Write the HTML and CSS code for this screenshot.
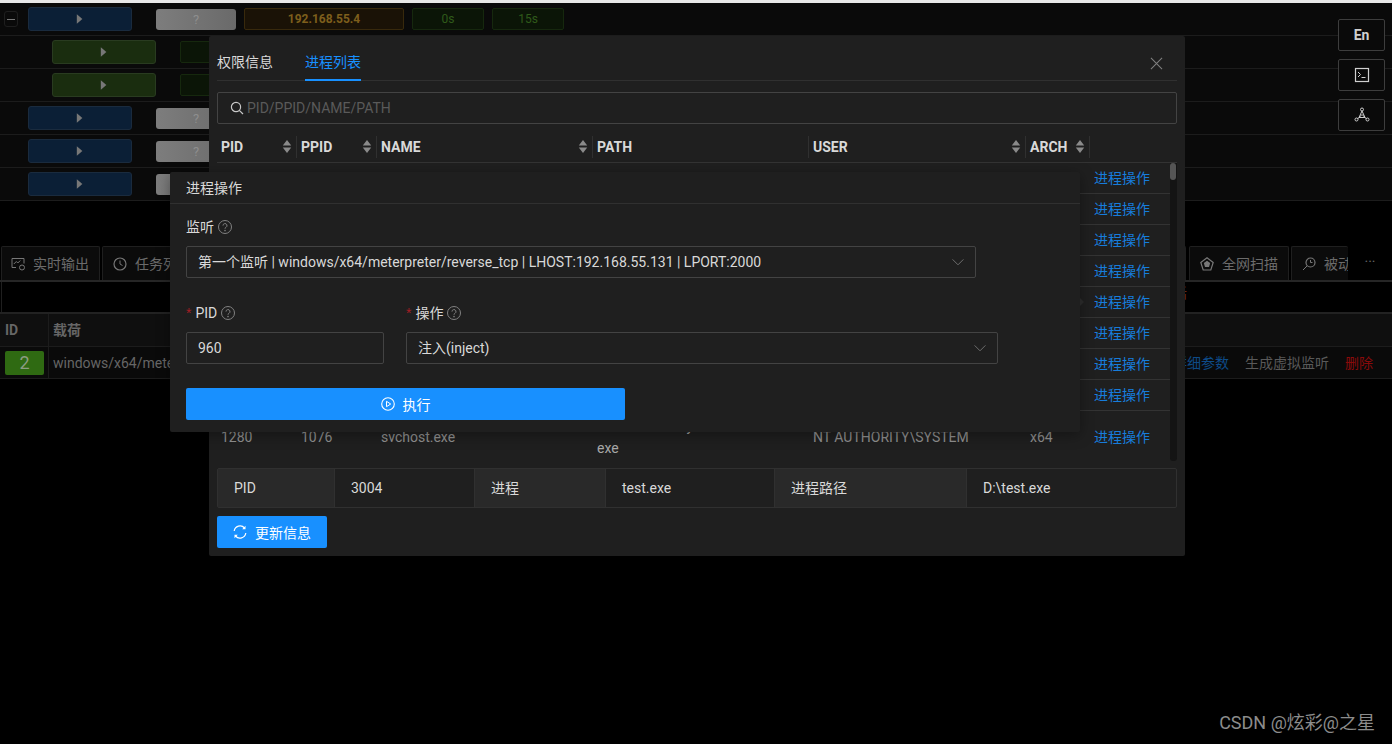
FILE: index.html
```html
<!DOCTYPE html>
<html lang="zh-CN">
<head>
    <meta charset="UTF-8">
    <title>进程操作</title>
    <link rel="stylesheet" href="styles.css">
</head>
<body>
    <svg class="icon-defs" width="0" height="0">
        <symbol id="i-help" viewBox="0 0 14 14"><circle cx="7" cy="7" r="6.500" fill="none" stroke="currentColor"/><path d="M5 5.600a2 2 0 1 1 3 1.700c-.7.400-1 .7-1 1.400" fill="none" stroke="currentColor"/><circle cx="7" cy="10.600" r=".8" fill="currentColor"/></symbol>
        <symbol id="i-down" viewBox="0 0 12 12"><path d="M.6 3.400 6 8.800l5.400-5.400" fill="none" stroke="currentColor"/></symbol>
        <symbol id="i-sort" viewBox="0 0 10 16"><path d="M5 1 9.500 7h-9zM5 15 .5 9h9z" fill="currentColor"/></symbol>
        <symbol id="i-play" viewBox="0 0 10 14"><path d="M1 1l7 6-7 6z" fill="currentColor"/></symbol>
    </svg>

    <div class="top-line"></div>

    <div class="session-row">
        <span class="collapse-btn"></span>
        <span class="btn-blue"><svg class="play"><use href="#i-play"/></svg></span>
        <span class="btn-grey">?</span>
        <span class="tag-ip">192.168.55.4</span>
        <span class="tag-time">0s</span>
        <span class="tag-time">15s</span>
    </div>
    <div class="session-row child-row">
        <span class="btn-green"><svg class="play"><use href="#i-play"/></svg></span>
        <span class="tag-time"></span>
    </div>
    <div class="session-row child-row">
        <span class="btn-green"><svg class="play"><use href="#i-play"/></svg></span>
        <span class="tag-time"></span>
    </div>
    <div class="session-row">
        <span class="collapse-space"></span>
        <span class="btn-blue"><svg class="play"><use href="#i-play"/></svg></span>
        <span class="btn-grey">?</span>
    </div>
    <div class="session-row">
        <span class="collapse-space"></span>
        <span class="btn-blue"><svg class="play"><use href="#i-play"/></svg></span>
        <span class="btn-grey">?</span>
    </div>
    <div class="session-row">
        <span class="collapse-space"></span>
        <span class="btn-blue"><svg class="play"><use href="#i-play"/></svg></span>
        <span class="btn-grey">?</span>
    </div>

    <div class="bottom-tabs">
        <div class="bottom-tab tab-first">
            <svg class="tab-icon" viewBox="0 0 14 14"><path d="M5 10.500H1V1.500h12v5M2.800 7l2.500-2.500 1.500 1.500 2.500-2.500" fill="none" stroke="currentColor"/><circle cx="11" cy="10.500" r="2.500" fill="none" stroke="currentColor"/></svg>
            实时输出
        </div>
        <div class="bottom-tab tab-second">
            <svg class="tab-icon" viewBox="0 0 14 14"><circle cx="7" cy="7" r="6" fill="none" stroke="currentColor" stroke-width="1.200"/><path d="M7 3.500V7l2.500 1.500" fill="none" stroke="currentColor"/></svg>
            任务列表
        </div>
        <div class="bottom-tab tab-hidden"></div>
        <div class="bottom-tab tab-scan">
            <svg class="tab-icon" viewBox="0 0 14 14"><path d="M7 .8 13.200 5.400 10.800 13H3.200L.8 5.400z" fill="none" stroke="currentColor" stroke-width="1.200"/><path d="M7 3.800l3.200 2.300-1.200 3.900H5L3.800 6.100z" fill="currentColor"/></svg>
            全网扫描
        </div>
        <div class="bottom-tab tab-passive">
            <svg class="tab-icon" viewBox="0 0 14 14"><circle cx="8.500" cy="5.500" r="4.500" fill="none" stroke="currentColor" stroke-width="1.200"/><path d="M5.200 8.800 1 13M8.500 3v2.500h2" fill="none" stroke="currentColor"/></svg>
            被动扫描
        </div>
        <div class="tab-more">···</div>
    </div>

    <div class="tab-band"><span class="band-text">话</span></div>

    <div class="job-head">
        <div class="job-id">ID</div>
        <div class="job-payload">载荷</div>
    </div>
    <div class="job-row">
        <div class="job-id"><span class="job-badge">2</span></div>
        <div class="job-payload">windows/x64/meterpreter/reverse_tcp</div>
        <div class="job-actions">
            <span class="link-blue">详细参数</span>
            <span class="link-grey">生成虚拟监听</span>
            <span class="link-red">删除</span>
        </div>
    </div>

    <div class="side-tools">
        <div class="side-btn side-en">En</div>
        <div class="side-btn">
            <svg class="side-icon" viewBox="0 0 16 16"><rect x="1.500" y="1.500" width="13" height="13" fill="none" stroke="currentColor" stroke-width="1.200"/><path d="M4 5l2.500 2.500L4 10M7.500 10.500h4" fill="none" stroke="currentColor"/></svg>
        </div>
        <div class="side-btn">
            <svg class="side-icon" viewBox="0 0 16 16"><path d="M8 4 5 10.500h6zM8 7.500 3.500 12M8 7.500 12.500 12" fill="none" stroke="currentColor"/><circle cx="8" cy="2.500" r="1.500" fill="none" stroke="currentColor"/><circle cx="2.500" cy="12.500" r="1.500" fill="none" stroke="currentColor"/><circle cx="13.500" cy="12.500" r="1.500" fill="none" stroke="currentColor"/></svg>
        </div>
    </div>

    <!-- 主机详情弹窗 -->
    <div class="modal-host">
        <div class="host-tabs">
            <span class="host-tab">权限信息</span>
            <span class="host-tab host-tab-active">进程列表</span>
            <svg class="close-icon" viewBox="0 0 14 14"><path d="M1 1l12 12M13 1 1 13" fill="none" stroke="currentColor" stroke-width="1.100"/></svg>
        </div>
        <div class="search-box">
            <svg class="search-icon" viewBox="0 0 14 14"><circle cx="6" cy="6" r="4.600" fill="none" stroke="currentColor" stroke-width="1.200"/><path d="M9.300 9.300 13 13" fill="none" stroke="currentColor" stroke-width="1.200"/></svg>
            <span class="search-hint">PID/PPID/NAME/PATH</span>
        </div>

        <div class="proc-head">
            <div class="proc-th">PID<svg class="sort"><use href="#i-sort"/></svg></div>
            <div class="proc-th">PPID<svg class="sort"><use href="#i-sort"/></svg></div>
            <div class="proc-th">NAME<svg class="sort"><use href="#i-sort"/></svg></div>
            <div class="proc-th">PATH</div>
            <div class="proc-th">USER<svg class="sort"><use href="#i-sort"/></svg></div>
            <div class="proc-th">ARCH<svg class="sort"><use href="#i-sort"/></svg></div>
            <div class="proc-th proc-th-last"></div>
        </div>
        <div class="proc-wrap">
            <div class="proc-rows">
                <div class="proc-row"><span class="proc-action">进程操作</span></div>
                <div class="proc-row"><span class="proc-action">进程操作</span></div>
                <div class="proc-row"><span class="proc-action">进程操作</span></div>
                <div class="proc-row"><span class="proc-action">进程操作</span></div>
                <div class="proc-row"><span class="proc-action">进程操作</span></div>
                <div class="proc-row"><span class="proc-action">进程操作</span></div>
                <div class="proc-row"><span class="proc-action">进程操作</span></div>
                <div class="proc-row"><span class="proc-action">进程操作</span></div>
                <div class="proc-row proc-row-tall">
                    <span>1280</span>
                    <span>1076</span>
                    <span>svchost.exe</span>
                    <span class="proc-path">C:\Windows\System32\svchost.exe</span>
                    <span>NT AUTHORITY\SYSTEM</span>
                    <span>x64</span>
                    <span class="proc-action">进程操作</span>
                </div>
            </div>
            <div class="scroll-track"><div class="scroll-thumb"></div></div>
        </div>

        <div class="desc-grid">
            <div class="desc-label">PID</div>
            <div class="desc-value">3004</div>
            <div class="desc-label">进程</div>
            <div class="desc-value">test.exe</div>
            <div class="desc-label">进程路径</div>
            <div class="desc-value">D:\test.exe</div>
        </div>
        <button class="btn-primary btn-update">
            <svg class="btn-icon" viewBox="0 0 14 14"><path d="M1.200 6A5.900 5.900 0 0 1 11.500 3M12.800 8A5.900 5.900 0 0 1 2.500 11" fill="none" stroke="currentColor" stroke-width="1.200"/><path d="M12.500 .8v3.400H9.200zM1.500 13.200V9.800h3.300z" fill="currentColor"/></svg>
            更新信息
        </button>
    </div>

    <!-- 进程操作弹窗 -->
    <div class="modal-action">
        <div class="action-title">进程操作</div>
        <div class="action-body">
            <div class="form-label">监听 <svg class="help"><use href="#i-help"/></svg></div>
            <div class="select-box select-listener">
                第一个监听 | windows/x64/meterpreter/reverse_tcp | LHOST:192.168.55.131 | LPORT:2000
                <svg class="chevron"><use href="#i-down"/></svg>
            </div>
            <div class="form-row">
                <div class="form-col col-pid">
                    <div class="form-label"><span class="required">*</span> PID <svg class="help"><use href="#i-help"/></svg></div>
                    <div class="select-box">960</div>
                </div>
                <div class="form-col col-op">
                    <div class="form-label"><span class="required">*</span> 操作 <svg class="help"><use href="#i-help"/></svg></div>
                    <div class="select-box">
                        注入(inject)
                        <svg class="chevron"><use href="#i-down"/></svg>
                    </div>
                </div>
            </div>
            <button class="btn-primary btn-run">
                <svg class="btn-icon" viewBox="0 0 14 14"><circle cx="7" cy="7" r="6.300" fill="none" stroke="currentColor" stroke-width="1.100"/><path d="M5.500 4.300 9.700 7l-4.200 2.700z" fill="none" stroke="currentColor"/></svg>
                执行
            </button>
        </div>
    </div>
    <span class="modal-arrow"></span>

    <div class="watermark">CSDN @炫彩@之星</div>
</body>
</html>
```

FILE: styles.css
```css
* {
    box-sizing: border-box;
}
html, body {
    height: 100%;
}
body {
    margin: 0;
    background-color: #000;
    color: #d9d9d9;
    font-family: Roboto, "Noto Sans CJK SC", sans-serif;
    font-size: 14px;
    line-height: 22px;
    overflow: hidden;
    position: relative;
}
.icon-defs {
    position: absolute;
}
.top-line {
    height: 3px;
    background-color: #e8e8e8;
}

/* session rows */
.session-row {
    height: 33px;
    display: flex;
    align-items: center;
    padding-left: 4px;
    background-color: #0a0a0a;
    border-bottom: 1px solid #1c1c1c;
}
.child-row {
    padding-left: 52px;
}
.collapse-btn, .collapse-space {
    width: 14px;
    height: 16px;
    margin-right: 10px;
    flex: none;
}
.collapse-btn {
    border: 1px solid #1e1e1e;
    border-radius: 3px;
    display: flex;
    align-items: center;
    justify-content: center;
}
.collapse-btn::before {
    content: "";
    width: 8px;
    height: 1px;
    background-color: #777;
}
.btn-blue, .btn-green {
    width: 104px;
    height: 24px;
    margin-right: 24px;
    border-radius: 3px;
    display: flex;
    align-items: center;
    justify-content: center;
}
.btn-blue {
    background-color: #0b1f36;
    border: 1px solid #1a2b3e;
}
.btn-green {
    background-color: #1a2d0f;
    border: 1px solid #293b20;
}
.play {
    width: 8px;
    height: 12px;
    color: #777;
}
.btn-grey {
    width: 80px;
    height: 21px;
    margin-right: 8px;
    border-radius: 3px;
    background: linear-gradient(90deg, #7d7d7d, #6a6a6a);
    color: #8e8e8e;
    font-size: 13px;
    text-align: center;
}
.tag-ip, .tag-time {
    height: 22px;
    margin-right: 8px;
    border-radius: 2px;
    text-align: center;
    line-height: 20px;
    font-size: 12px;
}
.tag-ip {
    width: 160px;
    background-color: #1a1206;
    border: 1px solid #38290c;
    color: #7d5e1c;
    font-weight: 700;
}
.tag-time {
    width: 72px;
    background-color: #0b1507;
    border: 1px solid #16280e;
    color: #2f5a1a;
}

/* bottom tab strip */
.bottom-tabs {
    height: 36px;
    margin-top: 45px;
    padding-left: 1px;
    display: flex;
    border-bottom: 2px solid #262626;
    overflow: hidden;
}
.bottom-tab {
    height: 34px;
    background-color: #0b0b0b;
    border: 1px solid #1f1f1f;
    border-bottom: none;
    border-radius: 2px 2px 0 0;
    display: flex;
    align-items: center;
    gap: 8px;
    color: #6b6b6b;
    white-space: nowrap;
    overflow: hidden;
    flex: none;
}
.tab-first {
    width: 99px;
    padding-left: 9px;
    margin-right: 2px;
}
.tab-second {
    width: 100px;
    padding-left: 10px;
}
.tab-hidden {
    width: 60px;
    margin-left: auto;
    margin-right: 3px;
}
.tab-scan {
    width: 100px;
    padding-left: 10px;
    margin-right: 2px;
}
.tab-passive {
    width: 57px;
    padding-left: 10px;
    border-right: none;
}
.tab-icon {
    width: 14px;
    height: 14px;
    flex: none;
    color: #777;
}
.tab-more {
    width: 44px;
    text-align: center;
    color: #666;
    line-height: 32px;
    flex: none;
}
.tab-band {
    height: 30px;
    margin-left: 1px;
    border-left: 1px solid #1f1f1f;
    text-align: right;
    padding-right: 205px;
}
.band-text {
    color: #6b2a10;
    font-size: 14px;
    line-height: 22px;
}

/* job table */
.job-head, .job-row {
    display: flex;
    align-items: stretch;
    border-top: 2px solid #222;
    background-color: #0f0f0f;
    color: #666;
}
.job-head {
    height: 34px;
}
.job-row {
    height: 33px;
    border-top: 1px solid #1c1c1c;
    border-bottom: 1px solid #1c1c1c;
    background-color: #0a0a0a;
}
.job-id {
    width: 49px;
    padding-left: 5px;
    border-right: 1px solid #1c1c1c;
    display: flex;
    align-items: center;
    font-weight: 700;
}
.job-head .job-payload {
    display: flex;
    align-items: center;
    padding-left: 4px;
    font-weight: 700;
}
.job-row .job-payload {
    display: flex;
    align-items: center;
    padding-left: 4px;
}
.job-badge {
    width: 39px;
    height: 24px;
    background-color: #2f6a12;
    border-radius: 2px;
    color: #8c9c82;
    font-size: 18px;
    font-weight: 400;
    line-height: 24px;
    text-align: center;
}
.job-actions {
    margin-left: auto;
    padding-right: 19px;
    display: flex;
    align-items: center;
    gap: 16px;
}
.link-blue {
    color: #0d4a87;
}
.link-grey {
    color: #595959;
}
.link-red {
    color: #8a0a0a;
}

/* side tools */
.side-tools {
    position: absolute;
    top: 19px;
    left: 1338px;
    display: flex;
    flex-direction: column;
    gap: 8px;
}
.side-btn {
    width: 47px;
    height: 32px;
    border: 1px solid #3d3d3d;
    border-radius: 2px;
    background-color: #0a0a0a;
    display: flex;
    align-items: center;
    justify-content: center;
    color: #d0d0d0;
}
.side-en {
    font-size: 14px;
    font-weight: 700;
}
.side-icon {
    width: 16px;
    height: 16px;
}

/* outer modal */
.modal-host {
    position: absolute;
    left: 209px;
    top: 36px;
    width: 976px;
    height: 520px;
    padding: 0 8px;
    background-color: #1f1f1f;
    border-radius: 2px;
}
.host-tabs {
    height: 45px;
    display: flex;
    gap: 32px;
    border-bottom: 1px solid #303030;
    position: relative;
}
.host-tab {
    height: 45px;
    padding-top: 15px;
    color: #d9d9d9;
}
.host-tab-active {
    color: #1890ff;
    border-bottom: 2px solid #1890ff;
}
.close-icon {
    position: absolute;
    right: 14px;
    top: 21px;
    width: 13px;
    height: 13px;
    color: #808080;
}
.search-box {
    height: 32px;
    margin-top: 11px;
    padding-left: 12px;
    border: 1px solid #434343;
    border-radius: 2px;
    display: flex;
    align-items: center;
    gap: 3px;
}
.search-icon {
    width: 14px;
    height: 14px;
    color: #c8c8c8;
}
.search-hint {
    color: #5a5a5a;
}
.proc-head {
    height: 32px;
    margin-top: 7px;
    display: grid;
    grid-template-columns: 80px 80px 216px 216px 217px 64px 87px;
    align-items: center;
    border-bottom: 1px solid #333;
}
.proc-th {
    height: 22px;
    padding: 0 4px;
    border-right: 1px solid #303030;
    display: flex;
    align-items: center;
    justify-content: space-between;
    font-weight: 700;
    color: #d9d9d9;
}
.proc-th-last {
    border-right: none;
}
.sort {
    width: 10px;
    height: 15px;
    color: #8a8a8a;
}
.proc-wrap {
    height: 298px;
    display: flex;
    overflow: hidden;
}
.proc-rows {
    width: 953px;
}
.proc-row {
    height: 31px;
    display: grid;
    grid-template-columns: 80px 80px 216px 216px 217px 64px 80px;
    align-items: center;
    border-bottom: 1px solid #333;
    color: #8f8f8f;
}
.proc-row span {
    padding: 0 4px;
}
.proc-row-tall {
    height: 50px;
    padding-top: 2px;
    border-bottom: none;
}
.proc-action {
    grid-column: 7;
    color: #177ddc;
    white-space: nowrap;
}
.proc-path {
    word-break: break-all;
    color: #a8a8a8;
}
.scroll-track {
    width: 7px;
    background-color: #141414;
    border-radius: 0 0 3px 3px;
}
.scroll-thumb {
    width: 6px;
    height: 17px;
    background-color: #555;
    border-radius: 3px;
}
.desc-grid {
    height: 40px;
    margin-top: 7px;
    display: grid;
    grid-template-columns: 117px 140px 131px 169px 192px 211px;
    border: 1px solid #303030;
    border-radius: 2px;
}
.desc-label, .desc-value {
    padding-left: 16px;
    line-height: 38px;
    border-right: 1px solid #303030;
}
.desc-label {
    background-color: #292929;
}
.desc-value:last-child {
    border-right: none;
}

/* buttons */
.btn-primary {
    height: 32px;
    border: none;
    border-radius: 2px;
    background-color: #1890ff;
    color: #fff;
    font-family: inherit;
    font-size: 14px;
    display: flex;
    align-items: center;
    justify-content: center;
    gap: 8px;
}
.btn-icon {
    width: 14px;
    height: 14px;
}
.btn-update {
    width: 110px;
    margin-top: 8px;
}
.btn-run {
    width: 439px;
    margin-top: 24px;
}

/* inner modal */
.modal-action {
    position: absolute;
    left: 170px;
    top: 172px;
    width: 910px;
    height: 260px;
    background-color: #1f1f1f;
    border-radius: 2px;
    box-shadow: 0 3px 14px rgba(0, 0, 0, 0.35);
}
.modal-arrow {
    position: absolute;
    left: 1080px;
    top: 298px;
    border-left: 4px solid #262626;
    border-top: 4px solid transparent;
    border-bottom: 4px solid transparent;
}
.action-title {
    height: 32px;
    padding: 5px 16px 0;
    border-bottom: 1px solid #303030;
    color: #d9d9d9;
}
.action-body {
    padding: 12px 16px;
}
.form-label {
    height: 22px;
    margin-bottom: 8px;
    display: flex;
    align-items: center;
    gap: 4px;
    color: #d9d9d9;
}
.required {
    color: #a61d24;
    font-family: "Liberation Sans", sans-serif;
}
.help {
    width: 14px;
    height: 14px;
    color: #808080;
}
.select-box {
    height: 32px;
    padding: 0 11px;
    border: 1px solid #434343;
    border-radius: 2px;
    display: flex;
    align-items: center;
    justify-content: space-between;
    color: #d9d9d9;
    white-space: nowrap;
}
.chevron {
    width: 12px;
    height: 12px;
    color: #6e6e6e;
    flex: none;
}
.select-listener {
    width: 790px;
}
.form-row {
    margin-top: 24px;
    display: flex;
    gap: 22px;
}
.col-pid {
    width: 198px;
}
.col-op {
    width: 592px;
}

.watermark {
    position: absolute;
    right: 17px;
    top: 711px;
    color: #8c8c8c;
    font-size: 18px;
    line-height: 24px;
}
```
